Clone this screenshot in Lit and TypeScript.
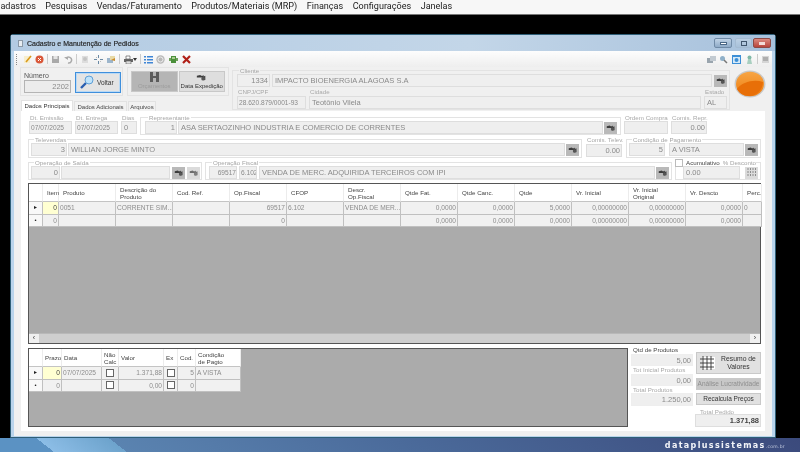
import { LitElement, css, html } from "lit";
import { customElement } from "lit/decorators.js";

const binoc = html`<svg class="bin" viewBox="0 0 13 11">
  <path d="M1 4l4-1 1 1h2l1-1v2l2-1v5H7V6H5L1 6z" fill="#3c3c3c" />
  <circle cx="8.5" cy="7.5" r="2.2" fill="#555" />
</svg>`;

const tile = (muted = false) => html`<span class="tile ${muted ? "muted" : ""}">${binoc}</span>`;

const field = (text: string, cls = "", right = false) =>
  html`<span class="field ${cls} ${right ? "right" : ""}">${text}</span>`;

const check = html`<span class="check"></span>`;

const headers1 = ["", "Item", "Produto", "Descrição do\nProduto", "Cod. Ref.", "Op.Fiscal", "CFOP", "Descr.\nOp.Fiscal",
  "Qtde Fat.", "Qtde Canc.", "Qtde", "Vr. Inicial", "Vr. Inicial\nOriginal", "Vr. Descto", "Perc."];

const rows1: [string, boolean][][] = [
  [["0", true], ["0051", false], ["CORRENTE SIM...", false], ["", false], ["69517", true], ["6.102", false], ["VENDA DE MER...", false],
   ["0,0000", true], ["0,0000", true], ["5,0000", true], ["0,00000000", true], ["0,00000000", true], ["0,0000", true], ["0", false]],
  [["0", true], ["", false], ["", false], ["", false], ["0", true], ["", false], ["", false],
   ["0,0000", true], ["0,0000", true], ["0,0000", true], ["0,00000000", true], ["0,00000000", true], ["0,0000", true], ["", false]],
];

@customElement("app-root")
export class AppRoot extends LitElement {
  static styles = css`
    :host {
      display: block;
      width: 800px;
      height: 452px;
      overflow: hidden;
      background: #000;
      font-family: "Liberation Sans", Arial, sans-serif;
      font-size: 7px;
      color: #8c8c8c;
      filter: blur(0.35px);
    }
    .menu {
      display: flex;
      height: 14px;
      background: #f7f7f7;
      border-bottom: 1px solid #777;
      font-family: Roboto, sans-serif;
      font-size: 9.07px;
      line-height: 13px;
      color: #222;
      white-space: nowrap;
      margin-left: -5.5px;
      gap: 9.5px;
    }
    .desk {
      box-sizing: border-box;
      height: 423px;
      padding: 19px 24px 0 10px;
    }
    .win {
      width: 766px;
      height: 404px;
      box-sizing: border-box;
      border: 1px solid #2f5f78;
      border-radius: 3px 3px 0 0;
      background: #b9d4ec;
      padding: 0 3px 1px 3px;
      display: flex;
      flex-direction: column;
    }
    .title {
      height: 16px;
      margin: 0 -3px;
      padding: 0 4px 0 7px;
      display: flex;
      align-items: center;
      gap: 4px;
      background: linear-gradient(90deg, #b3cbe3, #c3d6e8 60%, #a7c1dc);
      color: #222;
      font-size: 7px;
      font-weight: bold;
    }
    .title b { flex: 1; font-weight: normal; -webkit-text-stroke: 0.15px #222; }
    .doc { width: 5px; height: 7px; background: #e8edf2; border: 1px solid #8b99a7; box-sizing: border-box; }
    .wb { height: 10px; border: 1px solid #6f8aa6; border-radius: 2px; box-sizing: border-box; display: flex; align-items: center; justify-content: center; background: linear-gradient(#c0d3e6, #8fabc8); }
    .wb.min { width: 18px; margin-right: -1px; }
    .wb.max { width: 17px; margin-right: -3px; background: linear-gradient(#bcd0e4, #a8c1da); border-color: #a4bbd2; }
    .wb.cls { width: 18px; background: linear-gradient(#dc8a80, #b8453c); border-color: #8d4a45; }
    .wb i { display: block; box-sizing: border-box; background: #fff; }
    .wb.min i { width: 7px; height: 3px; border: 1px solid #4a6785; }
    .wb.max i { width: 6px; height: 5px; background: none; border: 1px solid #40566e; }
    .wb.cls i { width: 6px; height: 3px; background: #f3dcd8; }
    .inner {
      flex: 1;
      min-height: 0;
      background: #f0f0f0;
      display: flex;
      flex-direction: column;
    }
    .tools {
      height: 16px;
      display: flex;
      align-items: center;
      background: linear-gradient(#fdfdfd, #eeeeee);
      padding-left: 2px;
      padding-right: 2px;
    }
    .tools svg { width: 9px; height: 9px; flex: none; }
    .grip { width: 1px; height: 11px; margin-right: 5px; border-left: 1px dotted #888; }
    .sep { width: 1px; height: 10px; background: #ccc; flex: none; }
    .t3 { margin-left: 3px; } .t4 { margin-left: 4px; } .t2 { margin-left: 2px; }
    .caret { width: 0; height: 0; border: 2px solid transparent; border-top: 3px solid #333; margin: 2px 0 0 0; }
    .push { flex: 1; }
    .head {
      height: 44px;
      display: flex;
      padding-left: 6px;
    }
    .head-left {
      width: 212px;
      display: flex;
      flex-direction: column;
      justify-content: space-between;
    }
    .boxes { display: flex; gap: 4px; height: 29px; }
    .box {
      box-sizing: border-box;
      border: 1px solid #e3e3e3;
      display: flex;
      height: 29px;
    }
    .box.num { width: 103px; padding: 4px 0 0 3px; gap: 4px; }
    .box.num .stack { width: 47px; display: flex; flex-direction: column; gap: 1px; color: #555; }
    .box.num .stack .field { height: 13px; background: #ececec; border-color: #b4b4b4; }
    .voltar {
      width: 46px; height: 21px; box-sizing: border-box;
      border: 1px solid #3f8fdc; background: #e4e4e4;
      margin-top: 0; display: flex; align-items: center; gap: 3px; padding-left: 4px;
      color: #333; font-size: 6.5px; outline: 1px solid #b9d9f5; outline-offset: -2px;
    }
    .voltar svg { width: 14px; height: 15px; }
    .box.ops { width: 102px; padding: 3px; gap: 1px; }
    .big {
      width: 47px; height: 21px; box-sizing: border-box;
      display: flex; flex-direction: column; align-items: center; justify-content: flex-end;
      font-size: 6px; line-height: 8px; padding-bottom: 1px;
      background: #dedede; border: 1px solid #c8c8c8; color: #333;
    }
    .big.off { background: #b5b5b5; color: #9c9c9c; }
    .big svg { width: 11px; height: 10px; }
    .tabs { display: flex; height: 11px; align-items: flex-end; color: #444; font-size: 6px; gap: 1px; padding-left: 1px; white-space: nowrap; }
    .tabs span { display: block; height: 10px; line-height: 10px; background: #f2f2f2; border: 1px solid #e2e2e2; border-bottom: 0; box-sizing: border-box; text-align: center; }
    .tabs .on { height: 11px; line-height: 11px; width: 52px; background: #fff; color: #333; }
    .tabs .t-a { width: 53px; } .tabs .t-b { width: 28px; }
    fieldset {
      margin: 0; padding: 0 2px 0; border: 1px solid #e3e3e3; min-width: 0; box-sizing: border-box;
      display: block;
    }
    legend { padding: 0 1px; margin-left: 3px; height: 7px; line-height: 7px; font-size: 6.2px; color: #a5a5a5; white-space: nowrap; }
    .cliente { width: 498px; height: 43px; margin-left: 0; padding: 0 2px 0 4px; }
    .cliente legend { margin-left: 2px; }
    .cli-orange { width: 32px; height: 28px; margin: 3px 0 0 4px; }
    .line { display: flex; gap: 1px; align-items: center; }
    .c-top { gap: 2px; }
    .c-bot { display: flex; gap: 3px; margin-top: 1px; }
    .lab { display: flex; flex-direction: column; gap: 0; }
    .lab > label { display: block; height: 7px; line-height: 7px; font-size: 6.2px; color: #a8a8a8; padding-left: 1px; white-space: nowrap; }
    .c-bot .lab > label { height: 8px; line-height: 8px; }
    .field {
      display: block; box-sizing: border-box; height: 13px; line-height: 12px;
      background: #efefef; border: 1px solid #dedede; color: #8a8a8a;
      padding: 0 1px 0 2px; font-size: 7.5px; white-space: nowrap; overflow: hidden;
    }
    .tight { font-size: 6.6px; padding: 0 0 0 1px; }
    .right { text-align: right; }
    .grow { flex: 1; min-width: 0; }
    .tile { flex: none; width: 13px; height: 12px; background: #b9b9b9; display: flex; align-items: center; justify-content: center; }
    .tile.muted { background: #cfcfcf; opacity: 0.75; }
    .bin { width: 10px; height: 9px; }
    .w18 { width: 18px; flex: none; } .w28 { width: 28px; flex: none; } .w29 { width: 29px; flex: none; }
    .w32 { width: 32px; flex: none; } .w33 { width: 33px; flex: none; } .w36 { width: 36px; flex: none; }
    .w57 { width: 57px; flex: none; } .w69 { width: 69px; flex: none; } .w74 { width: 74px; flex: none; }
    .w109 { width: 109px; flex: none; } .w392 { width: 392px; flex: none; } .w23 { width: 23px; flex: none; }
    .page {
      flex: 1; min-height: 0; margin: 0 7px 5px 7px; background: #fff;
      padding: 3px 4px 4px 7px; display: flex; flex-direction: column;
    }
    .r1, .r2, .r3 { display: grid; }
    .r1 { grid-template-columns: 43px 43px 16px 481px 44px 36px; column-gap: 3px; height: 21px; margin-left: 1px; }
    .r2 { grid-template-columns: 554px 36px 135px; column-gap: 4px; height: 22px; margin-top: 1px; }
    .r3 { grid-template-columns: 174px 467px 86px; column-gap: 3px; height: 21px; margin-top: 1px; }
    .rep { padding: 0 3px 0 4px; }
    .r2 .lab > label { height: 8px; line-height: 8px; }
    .cond { padding-left: 2px; }
    .gap4 { gap: 4px; } .gap2 { gap: 2px; }
    .fisc { padding-left: 3px; }
    .acu { padding: 0; }
    .acu legend { margin-left: -1px; padding: 0; display: flex; align-items: center; gap: 3px; }
    .acu legend em { font-style: normal; color: #444; }
    .acu-line { padding-left: 7px; gap: 5px; }
    .check { display: block; box-sizing: border-box; width: 8px; height: 8px; background: #fff; border: 1px solid #666; flex: none; }
    .acu .check { border-color: #bbb; }
    .grid1, .grid2 { background: #ababab; border: 1px solid #555; box-sizing: border-box; display: flex; flex-direction: column; color: #8d8d8d; }
    .grid1 { height: 161px; margin-top: 3px; }
    .table { display: grid; flex: none; }
    .grid1 .table { grid-template-columns: 14px 16px repeat(12, 57px) 19px; grid-template-rows: 18px 12.5px 12.5px; }
    .grid2 .table { width: 212px; grid-template-columns: 14px 19px 40px 17px 45px 14px 18px 45px; grid-template-rows: 18px 12.5px 12.5px; }
    .th { background: #fff; color: #444; font-size: 6.2px; line-height: 7px; display: flex; align-items: center; padding-left: 4px; box-sizing: border-box; border-right: 1px solid #ececec; border-bottom: 1px solid #c4c4c4; white-space: pre-line; }
    .grid2 .th { padding-left: 2px; }
    .td { background: #f1f1f1; font-size: 6.6px; line-height: 11px; padding: 0 1px; box-sizing: border-box; border-right: 1px solid #c0c0c0; border-bottom: 1px solid #c0c0c0; white-space: nowrap; overflow: hidden; }
    .td.cur { background: #ffffd2; color: #444; }
    .td.mark { background: #f8f8f8; color: #222; font-size: 6px; text-align: center; }
    .td.box-c { display: flex; align-items: center; justify-content: center; }
    .spacer { flex: 1; }
    .bar { height: 9px; flex: none; margin-bottom: 0; display: flex; background: #cecece; font-size: 7px; line-height: 8px; color: #333; justify-content: space-between; border-top: 1px solid #b8b8b8; }
    .bar span { width: 10px; text-align: center; background: #f0f0f0; }
    .bottom { display: flex; gap: 3px; margin-top: 4px; height: 79px; }
    .grid2 { width: 600px; }
    .side { width: 130px; display: grid; grid-template-columns: 62px 65px; column-gap: 3px; }
    .side-l label, .side-r label { display: block; font-size: 6.2px; line-height: 7px; color: #a8a8a8; white-space: nowrap; padding-left: 2px; }
    .side-l { display: flex; flex-direction: column; }
    .side-l .field { height: 12px; border-color: #eee; line-height: 11px; }
    .side-l .field.last { height: 13px; }
    .side-l .dark { color: #444; height: 6px; line-height: 4px; }
    .side-l .t1 { height: 8px; }
    .side-r { display: flex; flex-direction: column; padding-top: 4px; }
    .btn { box-sizing: border-box; width: 65px; background: #e1e1e1; border: 1px solid #c9c9c9; color: #333; font-size: 6.5px; text-align: center; line-height: 10px; }
    .res { height: 22px; display: flex; align-items: center; gap: 1px; padding-left: 2px; line-height: 8px; font-size: 6.8px; }
    .res svg { width: 17px; height: 16px; flex: none; }
    .ana { height: 12px; margin-top: 4px; background: #c8c8c8; color: #8e8e8e; }
    .rec { height: 12px; margin-top: 3px; }
    .side-r label { margin-top: 4px; padding-left: 4px; height: 5px; line-height: 5px; }
    .tot { height: 13px; box-sizing: border-box; background: #efefef; border: 1px solid #dedede; font-size: 7.5px; line-height: 12px; color: #444; font-weight: bold; text-align: right; padding-right: 1px; margin-left: -1px; width: 66px; }
    .wall {
      height: 14px;
      background: linear-gradient(38deg, #5b92c3 0 6.6%, #8cbde6 6.6%, #6da3cc 15.5%, #5a83b0 15.5%, #4b6b9b 50%, #3b4a7c 100%);
      display: flex; justify-content: flex-end; align-items: center;
      padding-right: 15px; color: #f2f4f8;
      font-family: "DejaVu Sans", sans-serif; font-size: 8px; font-weight: bold; letter-spacing: 1.35px;
    }
    .wall small { font-size: 4.5px; letter-spacing: 0.3px; font-weight: normal; color: #c5cde0; margin-top: 3px; }
  `;

  private toolbar() {
    return html`<div class="tools">
      <span class="grip"></span>
      <svg viewBox="0 0 9 9"><path d="M1 1h6v7H1z" fill="#f7eecd" /><path d="M3 7L8 1" stroke="#d99a1a" stroke-width="1.6" /></svg>
      <svg class="t3" viewBox="0 0 9 9"><circle cx="4.5" cy="4.5" r="4" fill="#d9583a" /><path d="M3 3l3 3M6 3L3 6" stroke="#fff" /></svg>
      <span class="sep t3"></span>
      <svg class="t3" viewBox="0 0 9 9"><path d="M1 1h7v7H1z" fill="#a9a9a9" /><path d="M2.500 1h4v3h-4z" fill="#e4e4e4" /></svg>
      <svg class="t4" viewBox="0 0 9 9"><path d="M2 3.500A3 3 0 1 1 4 8" fill="none" stroke="#aaa" stroke-width="1.500" /><path d="M0 2h4v3z" fill="#aaa" /></svg>
      <span class="sep t3"></span>
      <svg class="t4" viewBox="0 0 9 9"><path d="M1 1h6v7H1z" fill="#ddd" /><circle cx="4" cy="4" r="2" fill="#c4c4c4" /></svg>
      <svg class="t4" viewBox="0 0 9 9"><path d="M4.500 0v3M4.500 6v3M0 4.500h3M6 4.500h3" stroke="#6b8aa5" /><path d="M2 2l1 1M6 6l1 1" stroke="#b9b9b9" /></svg>
      <svg class="t4" viewBox="0 0 9 9"><path d="M0 3h6v5H0z" fill="#9db6cc" /><path d="M3 1h5v4H3z" fill="#e7d9a6" /><path d="M4 5l4-2v3z" fill="#c98a2a" /></svg>
      <span class="sep t3"></span>
      <svg class="t4" viewBox="0 0 9 9"><path d="M2 1h4v3H2z" fill="#fff" stroke="#444" stroke-width=".6" /><path d="M0 4h9v3H0z" fill="#666" /><path d="M2 6h5v3H2z" fill="#ddd" stroke="#444" stroke-width=".5" /></svg>
      <span class="caret"></span>
      <span class="sep t3"></span>
      <svg class="t3" viewBox="0 0 9 9"><path d="M0 1h2v1.500H0zM0 4h2v1.500H0zM0 7h2v1.500H0z" fill="#3f86d6" /><path d="M3 1h6v1.500H3zM3 4h6v1.500H3zM3 7h6v1.500H3z" fill="#3f86d6" /></svg>
      <svg class="t3" viewBox="0 0 9 9"><circle cx="4.500" cy="4.500" r="4.200" fill="#b9b9b9" /><circle cx="4.500" cy="4.500" r="2.500" fill="none" stroke="#eee" /></svg>
      <svg class="t4" viewBox="0 0 9 9"><path d="M2 1h5v7H2z" fill="#4a8f3a" /><path d="M0 3h2v3H0zM7 3h2v3H7z" fill="#6fa05c" /><path d="M3 2h3v2H3z" fill="#a9cc8f" /></svg>
      <svg class="t4" viewBox="0 0 9 9"><path d="M1 1l7 7M8 1L1 8" stroke="#b01f17" stroke-width="2.200" /></svg>
      <span class="push"></span>
      <svg viewBox="0 0 9 9"><path d="M0 3h6v5H0z" fill="#9aa5ae" /><path d="M3 1h6v5H3z" fill="#c2cad1" /></svg>
      <svg class="t3" viewBox="0 0 9 9"><circle cx="3.500" cy="3.500" r="2.500" fill="#8fb0c9" /><path d="M5 5l3 3" stroke="#777" stroke-width="1.500" /></svg>
      <svg class="t4" viewBox="0 0 9 9"><path d="M0 0h9v9H0z" fill="#3d8fd6" /><path d="M1 2h7v6H1z" fill="#d6eaf8" /><circle cx="4.500" cy="5" r="2" fill="#3d8fd6" /></svg>
      <svg class="t4" viewBox="0 0 9 9"><circle cx="4.500" cy="2.500" r="2" fill="#7fb9a8" /><path d="M2 9l1-5h3l1 5z" fill="#a9cfc0" /></svg>
      <span class="sep t3"></span>
      <svg class="t3" viewBox="0 0 9 9"><path d="M1 1h7v7H1z" fill="#d5d5d5" /><path d="M2 3h5M2 5h5" stroke="#888" /></svg>
    </div>`;
  }

  private head() {
    return html`<div class="head">
      <div class="head-left">
        <div class="boxes">
          <div class="box num">
            <div class="stack"><span>Número</span>${field("2202", "", true)}</div>
            <div class="voltar">
              <svg viewBox="0 0 14 15"><path d="M6 8L1 13" stroke="#2a5fb0" stroke-width="2.400" /><circle cx="9" cy="5" r="4" fill="#bfe3fa" stroke="#5f9fd6" /></svg>
              <span>Voltar</span>
            </div>
          </div>
          <div class="box ops">
            <div class="big off">
              <svg viewBox="0 0 11 10"><path d="M1 0h3v4h3V0h3v10H7V6H4v4H1z" fill="#5c5c5c" /></svg>
              <span>Orçamentos</span>
            </div>
            <div class="big">${binoc}<span>Data Expedição</span></div>
          </div>
        </div>
        <div class="tabs">
          <span class="on">Dados Principais</span><span class="t-a">Dados Adicionais</span><span class="t-b">Arquivos</span>
        </div>
      </div>
      <fieldset class="cliente">
        <legend>Cliente</legend>
        <div class="line c-top">${field("1334", "w33", true)}${field("IMPACTO BIOENERGIA ALAGOAS S.A", "grow")}${tile()}</div>
        <div class="c-bot">
          <div class="lab"><label>CNPJ/CPF</label>${field("28.620.879/0001-93", "w69 tight")}</div>
          <div class="lab"><label>Cidade</label>${field("Teotônio Vilela", "w392")}</div>
          <div class="lab"><label>Estado</label>${field("AL", "w23")}</div>
        </div>
      </fieldset>
      <svg class="cli-orange" viewBox="0 0 32 28">
        <defs>
          <linearGradient id="ball" x1="0" y1="0" x2="0" y2="1"><stop offset="0" stop-color="#f7a544" /><stop offset="1" stop-color="#ee7d10" /></linearGradient>
        </defs>
        <ellipse cx="16" cy="14" rx="15.500" ry="13.500" fill="#c9c9c9" />
        <ellipse cx="16" cy="14" rx="14" ry="12.200" fill="url(#ball)" />
        <path d="M3 19C8 12 20 9 29 12 29 20 22 26 15 26 9 26 5 23 3 19z" fill="#e86f08" />
      </svg>
    </div>`;
  }

  private form() {
    return html`
      <div class="r1">
        <div class="lab"><label>Dt. Emissão</label>${field("07/07/2025", "tight")}</div>
        <div class="lab"><label>Dt. Entrega</label>${field("07/07/2025", "tight")}</div>
        <div class="lab"><label>Dias</label>${field("0")}</div>
        <fieldset class="rep">
          <legend>Representante</legend>
          <div class="line">${field("1", "w32", true)}${field("ASA SERTAOZINHO INDUSTRIA E COMERCIO DE CORRENTES", "grow")}${tile()}</div>
        </fieldset>
        <div class="lab"><label>Ordem Compra</label>${field("")}</div>
        <div class="lab"><label>Comis. Repr.</label>${field("0.00", "", true)}</div>
      </div>
      <div class="r2">
        <fieldset>
          <legend>Televendas</legend>
          <div class="line">${field("3", "w36", true)}${field("WILLIAN JORGE MINTO", "grow")}${tile()}</div>
        </fieldset>
        <div class="lab"><label>Comis. Telev.</label>${field("0.00", "", true)}</div>
        <fieldset class="cond">
          <legend>Condição de Pagamento</legend>
          <div class="line gap4">${field("5", "w36", true)}<div class="line grow">${field("A VISTA", "grow")}${tile()}</div></div>
        </fieldset>
      </div>
      <div class="r3">
        <fieldset>
          <legend>Operação de Saída</legend>
          <div class="line gap2"><div class="line">${field("0", "w29", true)}${field("", "w109")}</div>${tile()}${tile(true)}</div>
        </fieldset>
        <fieldset class="fisc">
          <legend>Operação Fiscal</legend>
          <div class="line gap2">${field("69517", "w28 tight", true)}${field("6.102", "w18 tight")}<div class="line grow">${field("VENDA DE MERC. ADQUIRIDA TERCEIROS COM IPI", "grow")}${tile()}</div></div>
        </fieldset>
        <fieldset class="acu">
          <legend>${check}<em>Acumulativo</em><span>% Desconto</span></legend>
          <div class="line acu-line">${field("0.00", "w57")}
            <span class="tile muted"><svg class="bin" viewBox="0 0 10 9"><path d="M1 0v9M3.500 0v9M6 0v9M8.500 0v9" stroke="#666" stroke-dasharray="2 1" /></svg></span>
          </div>
        </fieldset>
      </div>`;
  }

  private grid1() {
    return html`<div class="grid1">
      <div class="table">
        ${headers1.map((h) => html`<div class="th">${h}</div>`)}
        ${rows1.map((row, r) => html`
          <div class="td mark">${r === 0 ? "▸" : "•"}</div>
          ${row.map(([t, right], c) => html`<div class="td ${right ? "right" : ""} ${r === 0 && c === 0 ? "cur" : ""}">${t}</div>`)}
        `)}
      </div>
      <div class="spacer"></div>
      <div class="bar"><span>‹</span><span>›</span></div>
    </div>`;
  }

  private grid2() {
    const heads = ["", "Prazo", "Data", "Não\nCalc", "Valor", "Ex", "Cod.", "Condição\nde Pagto"];
    return html`<div class="grid2">
      <div class="table">
        ${heads.map((h) => html`<div class="th">${h}</div>`)}
        <div class="td mark">▸</div>
        <div class="td right cur">0</div>
        <div class="td">07/07/2025</div>
        <div class="td box-c">${check}</div>
        <div class="td right">1.371,88</div>
        <div class="td box-c">${check}</div>
        <div class="td right">5</div>
        <div class="td">A VISTA</div>
        <div class="td mark">•</div>
        <div class="td right">0</div>
        <div class="td"></div>
        <div class="td box-c">${check}</div>
        <div class="td right">0,00</div>
        <div class="td box-c">${check}</div>
        <div class="td right">0</div>
        <div class="td"></div>
      </div>
    </div>`;
  }

  private side() {
    return html`<div class="side">
      <div class="side-l">
        <label class="dark">Qtd de Produtos</label>
        ${field("5,00", "", true)}
        <label class="t1">Tot Inicial Produtos</label>
        ${field("0,00", "", true)}
        <label>Total Produtos</label>
        ${field("1.250,00", "last", true)}
      </div>
      <div class="side-r">
        <div class="btn res">
          <svg viewBox="0 0 17 16"><path d="M3 2h13v12H3z" fill="#fff" /><path d="M1 4h14M1 8h14M1 12h14M4 1v14M8 1v14M12 1v14" stroke="#333" stroke-width=".9" /></svg>
          <span>Resumo de Valores</span>
        </div>
        <div class="btn ana">Análise Lucratividade</div>
        <div class="btn rec">Recalcula Preços</div>
        <label>Total Pedido</label>
        <div class="tot">1.371,88</div>
      </div>
    </div>`;
  }

  render() {
    return html`
      <div class="menu">
        <span>Cadastros</span><span>Pesquisas</span><span>Vendas/Faturamento</span><span>Produtos/Materiais (MRP)</span><span>Finanças</span><span>Configurações</span><span>Janelas</span>
      </div>
      <div class="desk">
        <div class="win">
          <div class="title">
            <span class="doc"></span><b>Cadastro e Manutenção de Pedidos</b>
            <span class="wb min"><i></i></span><span class="wb max"><i></i></span><span class="wb cls"><i></i></span>
          </div>
          <div class="inner">
            ${this.toolbar()}
            ${this.head()}
            <div class="page">
              ${this.form()}
              ${this.grid1()}
              <div class="bottom">${this.grid2()}${this.side()}</div>
            </div>
          </div>
        </div>
      </div>
      <div class="wall">dataplussistemas<small>.com.br</small></div>
    `;
  }
}
